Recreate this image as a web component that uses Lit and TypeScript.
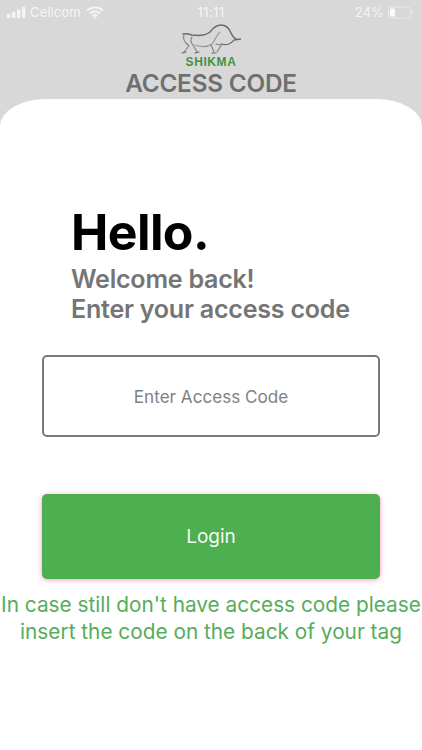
import { LitElement, html, css } from "lit";
import { customElement } from "lit/decorators.js";

@customElement("app-root")
export class AppRoot extends LitElement {
  static styles = css`
    :host { display: block; width: 422px; height: 750px; overflow: hidden; background: #d8d8d8; font-family: Inter, "Liberation Sans", sans-serif; }
    .page { height: 750px; display: flex; flex-direction: column; }
    .head { height: 99px; display: flex; flex-direction: column; align-items: center; flex: none; }
    .status { align-self: stretch; height: 24px; display: grid; grid-template-columns: 1fr auto 1fr; align-items: center; padding: 0 7px; color: #f4f4f4; font-size: 13.2px; box-sizing: border-box; }
    .left { display: flex; align-items: center; gap: 5px; }
    .bars { margin-right: -1px; }
    .right { display: flex; align-items: center; justify-content: flex-end; gap: 4px; padding-right: 1px; }
    .time { font-size: 13.5px; letter-spacing: .3px; }
    .logo { height: 46px; display: flex; flex-direction: column; align-items: center; }
    .shikma { font-size: 12px; line-height: 12px; font-weight: 800; color: #3f953f; letter-spacing: .6px; font-family: "Liberation Sans", sans-serif; margin-top: 1px; }
    .title { font-size: 24.3px; line-height: 28px; font-weight: 600; color: #6f6f6f; letter-spacing: -.2px; margin-top: -1px; }
    .card { flex: 1; background: #fff; border-radius: 46px 46px 0 0 / 27px 27px 0 0; display: flex; flex-direction: column; align-items: center; }
    .intro { align-self: stretch; padding: 100px 0 0 71px; }
    h1 { margin: 0; font-size: 50px; line-height: 66px; font-weight: 700; color: #000; letter-spacing: -.6px; }
    .sub { font-size: 25.1px; line-height: 30px; font-weight: 600; color: #757575; letter-spacing: -.25px; margin-top: -1px; }
    .input { width: 338px; height: 82px; margin-top: 31px; box-sizing: border-box; border: 2px solid #77797b; border-radius: 5px; display: flex; align-items: center; justify-content: center; color: #7f7f7f; font-size: 17.1px; }
    .btn { width: 338px; height: 85px; margin-top: 57px; border-radius: 5px; background: #4caf50; color: #f4faf4; font-size: 19px; display: flex; align-items: center; justify-content: center; box-shadow: 0 1px 5px rgba(240,110,165,.7); }
    .note { margin-top: 12px; width: 422px; text-align: center; color: #55ad5c; font-size: 20.8px; line-height: 27px; white-space: nowrap; }
  `;

  render() {
    return html`<div class="page">
      <div class="head">
        <div class="status">
          <div class="left">
            <svg class="bars" width="19" height="13" viewBox="0 0 19 13" fill="#f4f4f4"><rect x="0" y="8" width="3.4" height="4" rx=".8"/><rect x="5" y="6" width="3.4" height="6" rx=".8"/><rect x="10" y="3.5" width="3.4" height="8.5" rx=".8"/><rect x="15" y="1" width="3.4" height="11" rx=".8"/></svg>
            <span>Cellcom</span>
            <svg width="18" height="13" viewBox="0 0 18 13" fill="none" stroke="#f4f4f4" stroke-width="2"><path d="M1 4.6C5.6.6 12.4.6 17 4.6"/><path d="M3.8 7.5c3-2.6 7.4-2.6 10.4 0"/><path d="M6.6 10c1.4-1.1 3.4-1.1 4.8 0"/><path d="M9 12.9l-1.6-1.8c1-.7 2.2-.7 3.2 0z" fill="#f4f4f4" stroke="none"/></svg>
          </div>
          <div class="time">11:11</div>
          <div class="right">
            <span>24%</span>
            <svg width="26" height="13" viewBox="0 0 26 13"><rect x=".5" y="1" width="22" height="11" rx="3" fill="none" stroke="#efefef" stroke-opacity=".7"/><rect x="2" y="2.5" width="5" height="8" rx="1" fill="#fafafa"/><path d="M24 4.5c1 .3 1.4 1.1 1.4 2s-.4 1.7-1.4 2z" fill="#efefef" opacity=".7"/></svg>
          </div>
        </div>
        <div class="logo">
          <svg width="60" height="31" viewBox="0 0 60 31" fill="none" stroke="#6a6b6d" stroke-width="1.1" stroke-linecap="round" stroke-linejoin="round">
            <path d="M2 10c3-1 6 0 9 1 7 1 13 1 18-3 3-4 7-7 11-7 5 0 8 3 10 8 1 3 3 5 5 6" stroke-width="1.5"/>
            <path d="M60 15l-7 1c-1 2-3 3-5 4-3 1-5 1-7 0" stroke-width="1.3"/>
            <path d="M3 11c-1 3 0 6 2 8l3 3-5 6" stroke="#808185"/>
            <path d="M11 13c-2 3-1 6 1 8l4 7" stroke="#808185"/>
            <path d="M14 21c6 2 13 2 17-1 3-3 4-9 8-12" stroke="#96979a"/>
            <path d="M35 20c2 1 4 1 6 0l-5 8" stroke="#808185"/>
            <path d="M30 21l3 7" stroke="#808185"/>
            <path d="M1 29l4-1M14 29l4-1M31 29h4" stroke-width="1.2"/>
          </svg>
          <div class="shikma">SHIKMA</div>
        </div>
        <div class="title">ACCESS CODE</div>
      </div>
      <div class="card">
        <div class="intro">
          <h1>Hello.</h1>
          <div class="sub">Welcome back!<br />Enter your access code</div>
        </div>
        <div class="input">Enter Access Code</div>
        <div class="btn">Login</div>
        <div class="note">In case still don't have access code please<br />insert the code on the back of your tag</div>
      </div>
    </div>`;
  }
}
